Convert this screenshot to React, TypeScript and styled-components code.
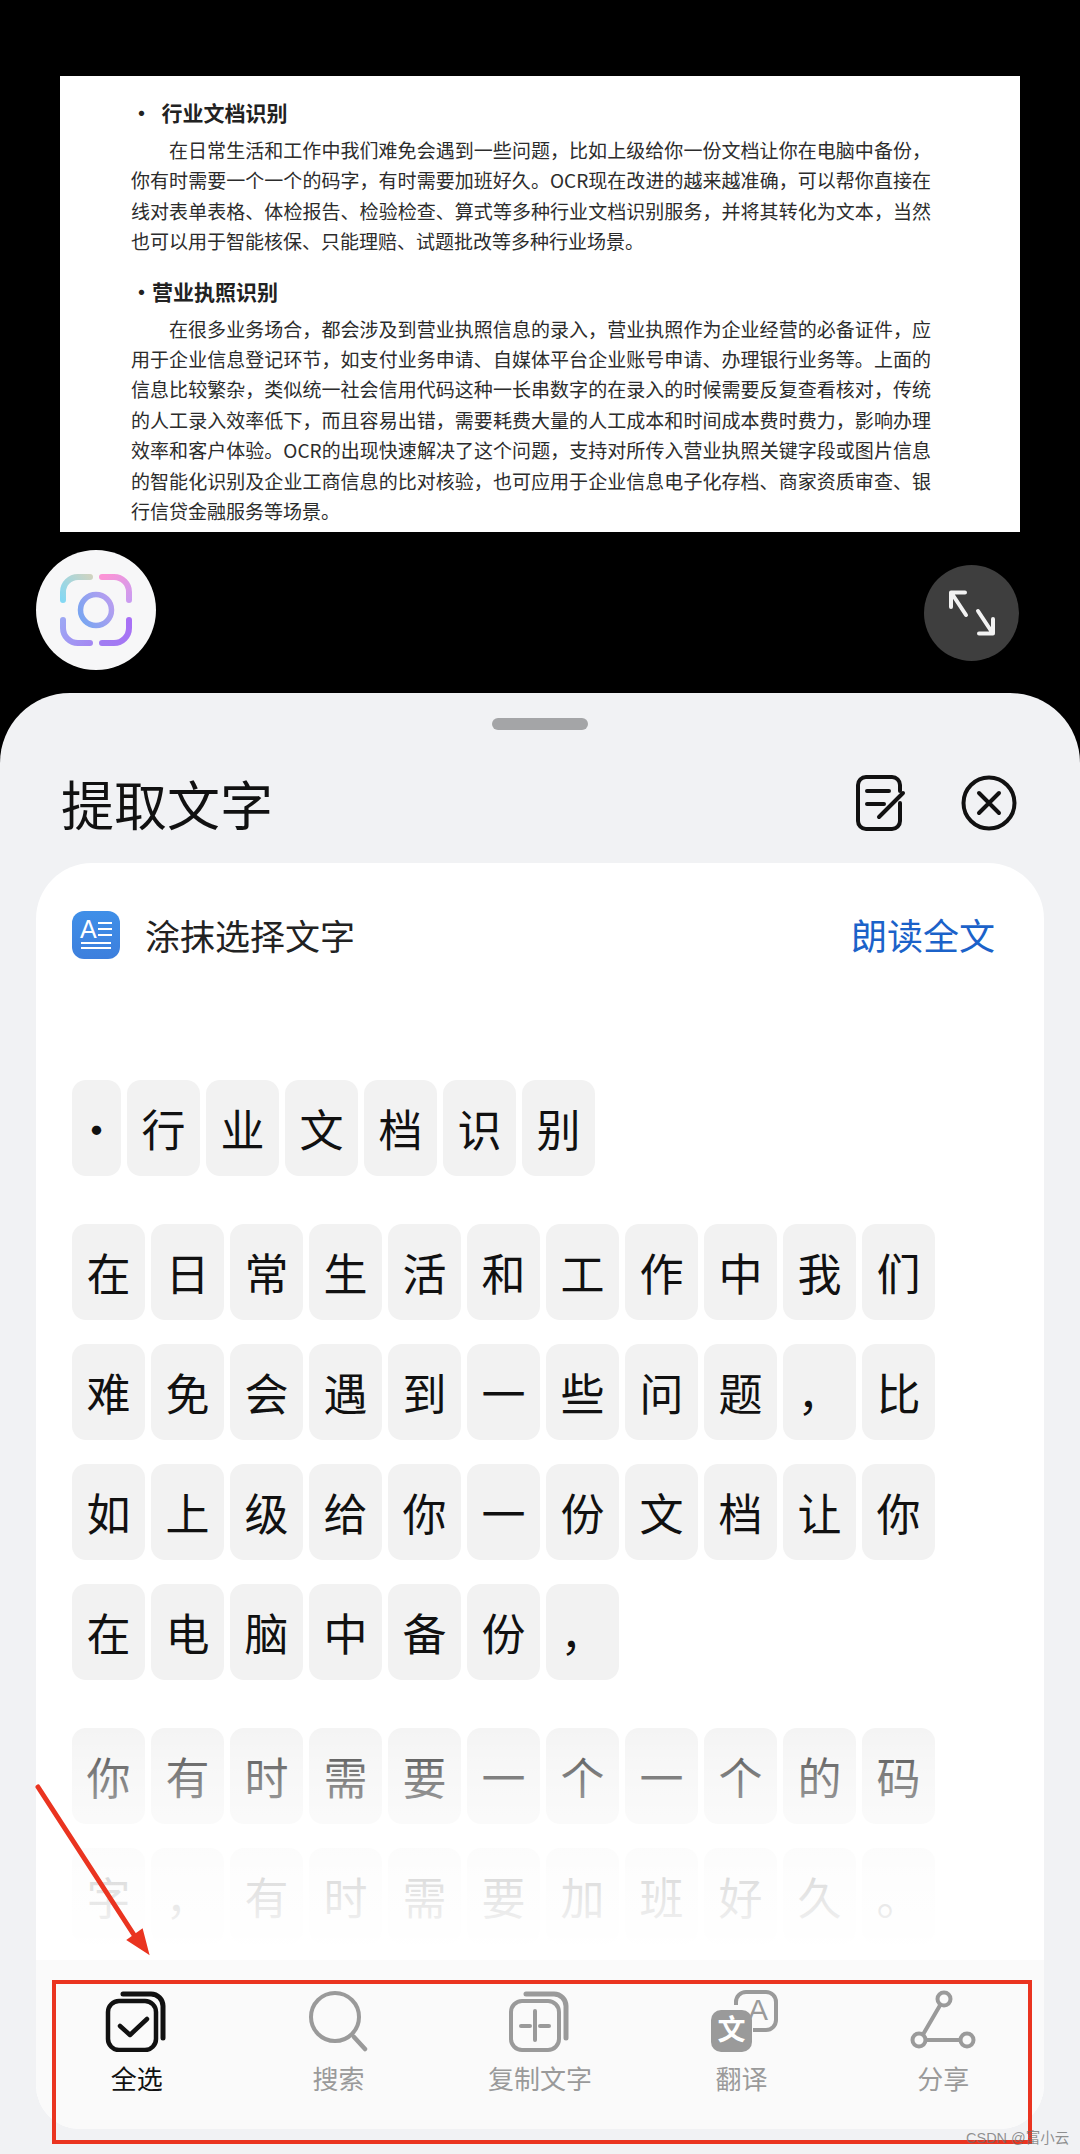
import styled, { createGlobalStyle } from "styled-components";

const cjk = `"Noto Sans CJK SC", "Noto Sans", sans-serif`;

const GlobalStyle = createGlobalStyle`
  html, body {
    margin: 0;
    padding: 0;
    background: #000;
  }
  * {
    box-sizing: border-box;
  }
`;

const Screen = styled.div`
  position: relative;
  width: 1080px;
  height: 2154px;
  padding-top: 76px;
  display: flex;
  flex-direction: column;
  background: #000;
  overflow: hidden;
  font-family: ${cjk};
`;

const Doc = styled.div`
  width: 960px;
  height: 456px;
  margin: 0 60px;
  padding: 20px 90px 0 71px;
  background: #fff;
  color: #2c2c2c;
  font-size: 19px;
  line-height: 30.4px;
`;

const DocHeading = styled.h3<{ $indent: number }>`
  margin: 0 0 7px;
  font-size: 21px;
  line-height: 32px;
  font-weight: 700;
  color: #222;
  white-space: pre;
  padding-left: ${(p) => p.$indent}px;
`;

const DocPara = styled.p`
  margin: 0 0 18px;
  width: 800px;
  text-indent: 38px;
  text-align: justify;
`;

const FloatRow = styled.div`
  height: 161px;
  padding: 18px 61px 0 36px;
  display: flex;
  justify-content: space-between;
  align-items: flex-start;
`;

const LensButton = styled.div`
  width: 120px;
  height: 120px;
  border-radius: 50%;
  background: #f7f7f8;
  display: flex;
  align-items: center;
  justify-content: center;
`;

const ExpandButton = styled.div`
  width: 95px;
  height: 96px;
  margin-top: 15px;
  border-radius: 50%;
  background: #3e3e3e;
  display: flex;
  align-items: center;
  justify-content: center;
`;

const Sheet = styled.section`
  flex: 1;
  min-height: 0;
  display: flex;
  flex-direction: column;
  padding: 25px 0 25px;
  background: #f1f2f4;
  border-radius: 70px 70px 0 0;
`;

const Handle = styled.div`
  width: 96px;
  height: 12px;
  margin: 0 auto;
  border-radius: 6px;
  background: #a4a5a7;
`;

const SheetHeader = styled.header`
  height: 133px;
  padding: 13px 63px 0 61px;
  display: flex;
  align-items: center;
  justify-content: space-between;
`;

const Title = styled.h1`
  margin: 0;
  font-size: 53px;
  line-height: 70px;
  font-weight: 400;
  color: #111;
`;

const HeaderActions = styled.div`
  display: flex;
  align-items: center;
  gap: 55px;
`;

const Card = styled.div`
  position: relative;
  flex: 1;
  min-height: 0;
  margin: 0 36px;
  display: flex;
  flex-direction: column;
  background: #fff;
  border-radius: 56px 56px 44px 44px;
  overflow: hidden;
`;

const CardHeader = styled.div`
  height: 95px;
  margin-top: 48px;
  padding: 0 49px 48px 36px;
  display: flex;
  align-items: center;
  gap: 25px;
  font-size: 35px;
  line-height: 47px;
  color: #222;
`;

const ReadAll = styled.span`
  margin-left: auto;
  font-size: 36px;
  color: #1b62c9;
`;

const Paragraphs = styled.div`
  flex: 1;
  min-height: 0;
  margin-top: 74px;
  padding-left: 36px;
  display: flex;
  flex-direction: column;
  gap: 48px;
`;

const Para = styled.div`
  display: flex;
  flex-direction: column;
  gap: 24px;
`;

const Row = styled.div`
  display: flex;
  gap: 6px;
`;

const Chip = styled.span<{ $narrow?: boolean }>`
  width: ${(p) => (p.$narrow ? 49 : 73)}px;
  height: 96px;
  flex: none;
  display: flex;
  align-items: center;
  justify-content: center;
  border-radius: 14px;
  background: #f2f2f2;
  color: #111;
  font-size: 44px;
  line-height: 1;
`;

// white wash that fades the last text rows into the toolbar
const Fade = styled.div`
  position: absolute;
  left: 0;
  right: 0;
  top: 840px;
  height: 258px;
  background: linear-gradient(
    to bottom,
    rgba(255, 255, 255, 0) 0,
    rgba(255, 255, 255, 0.45) 70px,
    rgba(255, 255, 255, 0.87) 180px,
    #fff 258px
  );
`;

const Toolbar = styled.nav`
  position: absolute;
  left: 0;
  right: 0;
  bottom: 0;
  height: 169px;
  padding-top: 30px;
  display: grid;
  grid-template-columns: repeat(5, 1fr);
  background: #fafafa;
`;

const Tool = styled.div<{ $active?: boolean }>`
  display: flex;
  flex-direction: column;
  align-items: center;
  color: ${(p) => (p.$active ? "#111" : "#9a9a9a")};
  font-size: 26px;
  line-height: 30px;
`;

const ToolGlyph = styled.svg`
  width: 72px;
  height: 62px;
  margin-bottom: 11px;
  display: block;
`;

const Highlight = styled.div`
  position: absolute;
  left: 52px;
  top: 1980px;
  width: 980px;
  height: 164px;
  border: 4px solid #ea3420;
`;

const Pointer = styled.svg`
  position: absolute;
  left: 30px;
  top: 1780px;
  width: 130px;
  height: 180px;
`;

const Watermark = styled.span`
  position: absolute;
  left: 966px;
  top: 2128px;
  font-family: "Liberation Sans", ${cjk};
  font-size: 14.5px;
  line-height: 20px;
  color: rgba(110, 110, 110, 0.75);
  white-space: nowrap;
`;

const paragraphs: string[][] = [
  ["·行业文档识别"],
  ["在日常生活和工作中我们", "难免会遇到一些问题，比", "如上级给你一份文档让你", "在电脑中备份，"],
  ["你有时需要一个一个的码", "字，有时需要加班好久。"],
];

const LensIcon = () => (
  <svg width="120" height="120" viewBox="0 0 120 120" fill="none" strokeWidth="6" strokeLinecap="round">
    <defs>
      <linearGradient id="lensTL" x1="27" y1="55" x2="60" y2="27" gradientUnits="userSpaceOnUse">
        <stop offset="0" stopColor="#7fd8f6" />
        <stop offset="1" stopColor="#d5d3bd" />
      </linearGradient>
      <linearGradient id="lensTR" x1="68" y1="27" x2="93" y2="55" gradientUnits="userSpaceOnUse">
        <stop offset="0" stopColor="#fb94d6" />
        <stop offset="1" stopColor="#c79cf2" />
      </linearGradient>
      <linearGradient id="lensBL" x1="27" y1="67" x2="60" y2="93" gradientUnits="userSpaceOnUse">
        <stop offset="0" stopColor="#9da8f4" />
        <stop offset="1" stopColor="#a586f2" />
      </linearGradient>
      <linearGradient id="lensBR" x1="93" y1="67" x2="68" y2="93" gradientUnits="userSpaceOnUse">
        <stop offset="0" stopColor="#a96ff6" />
        <stop offset="1" stopColor="#a17cf2" />
      </linearGradient>
      <linearGradient id="lensRing" x1="42" y1="70" x2="78" y2="50" gradientUnits="userSpaceOnUse">
        <stop offset="0" stopColor="#74a6f1" />
        <stop offset="1" stopColor="#bb9df0" />
      </linearGradient>
    </defs>
    <path d="M27 50V42a15 15 0 0 1 15-15h12" stroke="url(#lensTL)" />
    <path d="M66 27h12a15 15 0 0 1 15 15v8" stroke="url(#lensTR)" />
    <path d="M27 70v8a15 15 0 0 0 15 15h12" stroke="url(#lensBL)" />
    <path d="M93 70v8a15 15 0 0 1-15 15H66" stroke="url(#lensBR)" />
    <circle cx="60" cy="60" r="15.5" stroke="url(#lensRing)" strokeWidth="5.5" />
  </svg>
);

const ExpandIcon = () => (
  <svg width="56" height="56" viewBox="0 0 56 56" fill="none" stroke="#f2f2f2" strokeWidth="4" strokeLinecap="round" strokeLinejoin="round">
    <path d="M7 22V7.5h14M7.5 8 22 30" />
    <path d="M49 34v14.500H35M48.500 48 34 26" />
  </svg>
);

const NoteIcon = () => (
  <svg width="50" height="56" viewBox="0 0 50 56" fill="none" stroke="#111" strokeWidth="4" strokeLinecap="round">
    <path d="M44 28v18a8 8 0 0 1-8 8H10a8 8 0 0 1-8-8V10a8 8 0 0 1 8-8h26a8 8 0 0 1 8 8v6" />
    <path d="M11 16h22M11 29h17M23 42 47 18" />
  </svg>
);

const CloseIcon = () => (
  <svg width="56" height="56" viewBox="0 0 56 56" fill="none" stroke="#111" strokeWidth="4" strokeLinecap="round">
    <circle cx="28" cy="28" r="25.500" />
    <path d="M18 38 38 18M18 18l20 20" />
  </svg>
);

const DocBadge = () => (
  <svg width="48" height="48" viewBox="0 0 48 48">
    <defs>
      <linearGradient id="badgeFill" x1="0" y1="0" x2="0" y2="1">
        <stop offset="0" stopColor="#3f8fe8" />
        <stop offset="1" stopColor="#3d7fdd" />
      </linearGradient>
    </defs>
    <rect width="48" height="48" rx="12" fill="url(#badgeFill)" />
    <text x="8" y="27" fill="#fff" fontSize="25" fontFamily="Liberation Sans, sans-serif">A</text>
    <path d="M26 12h14M26 18h14M26 24h14M9 32h30M9 37h30" stroke="#fff" strokeWidth="1.800" fill="none" />
  </svg>
);

const StackBack = ({ color }: { color: string }) => (
  <path d="M22 4h28a12 12 0 0 1 12 12v32" stroke={color} strokeWidth="5" fill="none" strokeLinecap="round" />
);

const SelectIcon = () => (
  <ToolGlyph viewBox="0 0 72 62" fill="none">
    <StackBack color="#111" />
    <rect x="7" y="11" width="48" height="49" rx="11" stroke="#111" strokeWidth="4.500" fill="#fafafa" />
    <path d="M19 36l10 9 17-16" stroke="#111" strokeWidth="4.500" strokeLinecap="round" strokeLinejoin="round" />
  </ToolGlyph>
);

const SearchIcon = () => (
  <ToolGlyph viewBox="0 0 72 62" fill="none" stroke="#9a9a9a" strokeWidth="4" strokeLinecap="round">
    <circle cx="33" cy="27" r="24" />
    <path d="M52 47l11 12" strokeWidth="4.500" />
  </ToolGlyph>
);

const CopyIcon = () => (
  <ToolGlyph viewBox="0 0 72 62" fill="none">
    <StackBack color="#9a9a9a" />
    <rect x="7" y="11" width="48" height="49" rx="11" stroke="#9a9a9a" strokeWidth="4" fill="#fafafa" />
    <path d="M31 21v29M17 36h9M36 36h9" stroke="#9a9a9a" strokeWidth="4" strokeLinecap="round" />
  </ToolGlyph>
);

const TranslateIcon = () => (
  <ToolGlyph viewBox="0 0 72 62" fill="none">
    <path d="M30 15v-3a10 10 0 0 1 10-10h20a10 10 0 0 1 10 10v18a10 10 0 0 1-10 10h-13" stroke="#9a9a9a" strokeWidth="4" />
    <text x="42" y="30" fill="#9a9a9a" fontSize="30" fontFamily="Liberation Sans, sans-serif">A</text>
    <rect x="5" y="20" width="41" height="42" rx="10" fill="#9a9a9a" stroke="#fafafa" strokeWidth="0" />
    <text x="25.500" y="50" fill="#fff" fontSize="28" fontWeight="700" textAnchor="middle" fontFamily="Noto Sans CJK SC, sans-serif">文</text>
  </ToolGlyph>
);

const ShareIcon = () => (
  <ToolGlyph viewBox="0 0 72 62" fill="none" stroke="#9a9a9a" strokeWidth="4">
    <circle cx="37" cy="9" r="6.500" />
    <circle cx="12" cy="50" r="6.500" />
    <circle cx="60" cy="50" r="6.500" />
    <path d="M33.500 14.500 16 44.500M19 50h34" />
  </ToolGlyph>
);

const App = () => {
  return (
    <>
      <GlobalStyle />
      <Screen>
        <Doc>
          <DocHeading $indent={0}>{"·  行业文档识别"}</DocHeading>
          <DocPara>
            在日常生活和工作中我们难免会遇到一些问题，比如上级给你一份文档让你在电脑中备份，你有时需要一个一个的码字，有时需要加班好久。OCR现在改进的越来越准确，可以帮你直接在线对表单表格、体检报告、检验检查、算式等多种行业文档识别服务，并将其转化为文本，当然也可以用于智能核保、只能理赔、试题批改等多种行业场景。
          </DocPara>
          <DocHeading $indent={0}>·营业执照识别</DocHeading>
          <DocPara>
            在很多业务场合，都会涉及到营业执照信息的录入，营业执照作为企业经营的必备证件，应用于企业信息登记环节，如支付业务申请、自媒体平台企业账号申请、办理银行业务等。上面的信息比较繁杂，类似统一社会信用代码这种一长串数字的在录入的时候需要反复查看核对，传统的人工录入效率低下，而且容易出错，需要耗费大量的人工成本和时间成本费时费力，影响办理效率和客户体验。OCR的出现快速解决了这个问题，支持对所传入营业执照关键字段或图片信息的智能化识别及企业工商信息的比对核验，也可应用于企业信息电子化存档、商家资质审查、银行信贷金融服务等场景。
          </DocPara>
        </Doc>

        <FloatRow>
          <LensButton>
            <LensIcon />
          </LensButton>
          <ExpandButton>
            <ExpandIcon />
          </ExpandButton>
        </FloatRow>

        <Sheet>
          <Handle />
          <SheetHeader>
            <Title>提取文字</Title>
            <HeaderActions>
              <NoteIcon />
              <CloseIcon />
            </HeaderActions>
          </SheetHeader>

          <Card>
            <CardHeader>
              <DocBadge />
              <span>涂抹选择文字</span>
              <ReadAll>朗读全文</ReadAll>
            </CardHeader>

            <Paragraphs>
              {paragraphs.map((rows, i) => (
                <Para key={i}>
                  {rows.map((row, j) => (
                    <Row key={j}>
                      {Array.from(row).map((ch, k) => (
                        <Chip key={k} $narrow={ch === "·"}>
                          {ch}
                        </Chip>
                      ))}
                    </Row>
                  ))}
                </Para>
              ))}
            </Paragraphs>

            <Fade />

            <Toolbar>
              <Tool $active>
                <SelectIcon />
                全选
              </Tool>
              <Tool>
                <SearchIcon />
                搜索
              </Tool>
              <Tool>
                <CopyIcon />
                复制文字
              </Tool>
              <Tool>
                <TranslateIcon />
                翻译
              </Tool>
              <Tool>
                <ShareIcon />
                分享
              </Tool>
            </Toolbar>
          </Card>
        </Sheet>

        <Highlight />
        <Pointer viewBox="0 0 130 180" fill="none">
          <path d="M8 7 106 158" stroke="#ea3420" strokeWidth="5" strokeLinecap="round" />
          <path d="M118 173 98 160 112 150Z" fill="#ea3420" stroke="#ea3420" strokeWidth="2" />
        </Pointer>
        <Watermark>CSDN @富小云</Watermark>
      </Screen>
    </>
  );
};

export default App;
